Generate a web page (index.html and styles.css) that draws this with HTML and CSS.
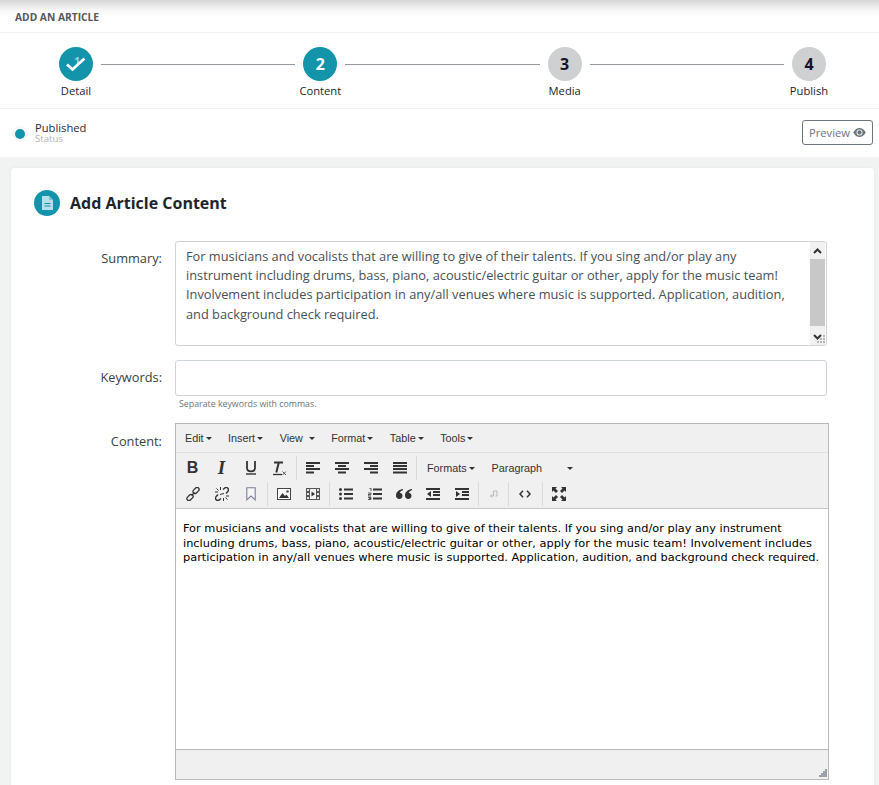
FILE: index.html
```html
<!DOCTYPE html>
<html lang="en">
<head>
<meta charset="utf-8">
<title>Add an article</title>
<link rel="stylesheet" href="styles.css">
</head>
<body>
<header class="top">ADD AN ARTICLE</header>
<nav class="stepper">
  <div class="step">
    <div class="dot done"><span class="ghost">1</span>
      <svg class="check" width="20" height="15" viewBox="0 0 20 15"><path d="M1 7.500l5.500 5L18.500 1.500" fill="none" stroke="#fff" stroke-width="2.700"/></svg>
    </div>
    <span class="step-label">Detail</span>
  </div>
  <div class="line"></div>
  <div class="step"><div class="dot active">2</div><span class="step-label">Content</span></div>
  <div class="line"></div>
  <div class="step"><div class="dot">3</div><span class="step-label">Media</span></div>
  <div class="line"></div>
  <div class="step"><div class="dot">4</div><span class="step-label">Publish</span></div>
</nav>
<section class="status">
  <div class="status-left">
    <span class="status-dot"></span>
    <div class="status-text"><div class="status-value">Published</div><div class="status-key">Status</div></div>
  </div>
  <button class="preview">Preview
    <svg width="13" height="9" viewBox="0 0 14 10"><path d="M0 5C2 1.600 4.500 0 7 0s5 1.600 7 5c-2 3.400-4.500 5-7 5S2 8.400 0 5z" fill="#6c757d"/><circle cx="7" cy="5" r="3.300" fill="#fff"/><circle cx="7" cy="5" r="2.400" fill="#6c757d"/></svg>
  </button>
</section>
<main class="page">
  <div class="card">
    <div class="card-head">
      <span class="head-icon">
        <svg width="12" height="14" viewBox="0 0 12 14"><path d="M1 0h7l4 4v10H1z" fill="#b5e0ea"/><path d="M8 0v4h4z" fill="#7cc4d4"/><path d="M3.500 7.500h6M3.500 10h6" stroke="#1394ab" stroke-width="1"/></svg>
      </span>
      <h1 class="card-title">Add Article Content</h1>
    </div>
    <div class="row">
      <label class="label">Summary:</label>
      <div class="summary">
        <div class="summary-text">For musicians and vocalists that are willing to give of their talents. If you sing and/or play any instrument including drums, bass, piano, acoustic/electric guitar or other, apply for the music team! Involvement includes participation in any/all venues where music is supported. Application, audition, and background check required.</div>
        <div class="scrollbar">
          <div class="sb-btn"><svg width="9" height="6" viewBox="0 0 9 6"><path d="M1 5l3.500-3.500L8 5" fill="none" stroke="#333" stroke-width="2"/></svg></div>
          <div class="sb-thumb"></div>
          <div class="sb-btn sb-end"><svg width="9" height="6" viewBox="0 0 9 6"><path d="M1 1l3.500 3.500L8 1" fill="none" stroke="#333" stroke-width="2"/></svg></div>
        </div>
        <svg class="grip" width="9" height="9" viewBox="0 0 9 9"><path d="M7 0h2v2H7zM4 3h2v2H4zM7 3h2v2H7zM1 6h2v2H1zM4 6h2v2H4zM7 6h2v2H7z" fill="#b5b5b5"/></svg>
      </div>
    </div>
    <div class="row row-keywords">
      <label class="label">Keywords:</label>
      <div class="field">
        <div class="input"></div>
        <small class="hint">Separate keywords with commas.</small>
      </div>
    </div>
    <div class="row row-content">
      <label class="label label-content">Content:</label>
      <div class="editor">
        <div class="menubar">
          <span class="menu">Edit<i class="caret"></i></span>
          <span class="menu">Insert<i class="caret"></i></span>
          <span class="menu menu-view">View<i class="caret"></i></span>
          <span class="menu">Format<i class="caret"></i></span>
          <span class="menu">Table<i class="caret"></i></span>
          <span class="menu">Tools<i class="caret"></i></span>
        </div>
        <div class="toolbar">
          <div class="tb-row">
            <div class="grp">
              <span class="tb tb-b">B</span>
              <span class="tb tb-i">I</span>
              <span class="tb"><svg width="12" height="14" viewBox="0 0 12 14"><path d="M2 0v7c0 4.500 8 4.500 8 0V0" fill="none" stroke="#333" stroke-width="1.800"/><path d="M1 13h10" stroke="#333" stroke-width="1.400"/></svg></span>
              <span class="tb"><svg width="15" height="15" viewBox="0 0 15 15"><path d="M2 1.500h9M6.800 1.500L4.300 11.500" fill="none" stroke="#333" stroke-width="2"/><path d="M1 13.500h9" stroke="#333" stroke-width="1.300"/><path d="M10.500 10.500l3.500 3.500M14 10.500L10.500 14" stroke="#555"/></svg></span>
            </div>
            <div class="grp">
              <span class="tb"><svg class="ic" viewBox="0 0 14 12"><path d="M0 1h14M0 4h8M0 7h14M0 10.500h8" stroke="#333" stroke-width="2"/></svg></span>
              <span class="tb"><svg class="ic" viewBox="0 0 14 12"><path d="M0 1h14M3 4h8M0 7h14M3 10.500h8" stroke="#333" stroke-width="2"/></svg></span>
              <span class="tb"><svg class="ic" viewBox="0 0 14 12"><path d="M0 1h14M6 4h8M0 7h14M6 10.500h8" stroke="#333" stroke-width="2"/></svg></span>
              <span class="tb"><svg class="ic" viewBox="0 0 14 12"><path d="M0 1h14M0 4h14M0 7h14M0 10.500h14" stroke="#333" stroke-width="2"/></svg></span>
            </div>
            <div class="grp grp-text">
              <span class="drop drop-formats">Formats<i class="caret"></i></span>
              <span class="drop drop-para"><span>Paragraph</span><i class="caret"></i></span>
            </div>
          </div>
          <div class="tb-row">
            <div class="grp">
              <span class="tb"><svg class="ic14" viewBox="0 0 14 14"><g fill="none" stroke="#333" stroke-width="1.300"><rect x="6.500" y="1.500" width="7" height="4" rx="2" transform="rotate(-45 10 3.500)"/><rect x=".5" y="8.500" width="7" height="4" rx="2" transform="rotate(-45 4 10.500)"/><path d="M5.500 8.500l3-3"/></g></svg></span>
              <span class="tb"><svg class="ic14" viewBox="0 0 14 14"><g fill="none" stroke="#333"><path d="M8 2.500l1.500-1.300a2.300 2.300 0 0 1 3.300 3.300L11 6.500M6 11.500l-1.500 1.300a2.300 2.300 0 0 1-3.300-3.300L3 7.500" stroke-width="1.400"/><path d="M5.500 0v3M8.500 11v3M0 5h3M11 9h3M1.500 1.500l2 2M12.500 12.500l-2-2M5 7.500l4-1"/></g></svg></span>
              <span class="tb"><svg width="10" height="14" viewBox="0 0 10 14"><path d="M.8.800h8.400v12L5 9l-4.200 3.800z" fill="#f6f6f6" stroke="#7b7f9c" stroke-width="1.100"/></svg></span>
            </div>
            <div class="grp">
              <span class="tb"><svg class="ic" viewBox="0 0 14 12"><rect x=".5" y=".5" width="13" height="11" fill="#fff" stroke="#444"/><path d="M2 10l3.500-5L8 8l1.500-1.500L12 10z" fill="#333"/><circle cx="10.500" cy="3.500" r="1.300" fill="#555"/></svg></span>
              <span class="tb"><svg class="ic" viewBox="0 0 14 12"><rect width="14" height="12" fill="#555"/><path d="M1 1h2v2H1zM1 5h2v2H1zM1 9h2v2H1zM11 1h2v2h-2zM11 5h2v2h-2zM11 9h2v2h-2z" fill="#e4e4e4"/><path d="M4 1h6v10H4z" fill="#f4f4f4"/><path d="M5.500 3.500L9 6 5.500 8.500z" fill="#333"/></svg></span>
            </div>
            <div class="grp">
              <span class="tb"><svg class="ic" viewBox="0 0 14 12"><path d="M5 1.500h9M5 6h9M5 10.500h9" stroke="#333" stroke-width="2"/><circle cx="1.500" cy="1.500" r="1.500" fill="#333"/><circle cx="1.500" cy="6" r="1.500" fill="#333"/><circle cx="1.500" cy="10.500" r="1.500" fill="#333"/></svg></span>
              <span class="tb"><svg class="ic" viewBox="0 0 14 12"><path d="M5 1.500h9M5 6h9M5 10.500h9" stroke="#333" stroke-width="2"/><path d="M1 0h2v3M0 5h3v1.500H0V8h3M0 9.500h3V11.500H0M1 10.500h2" fill="none" stroke="#333" stroke-width=".8"/></svg></span>
              <span class="tb"><svg width="16" height="10" viewBox="0 0 16 10"><path d="M7 0C3 .5 0 3 0 6.500 0 8.500 1.300 10 3.300 10s3.200-1.400 3.200-3.200S5.200 3.800 3.700 3.700C4.200 2.500 5.500 1.500 7 1.200zM16 0c-4 .5-7 3-7 6.500 0 2 1.300 3.500 3.300 3.500s3.200-1.400 3.200-3.200-1.300-3-2.800-3.100c.5-1.200 1.800-2.200 3.300-2.500z" fill="#333"/></svg></span>
              <span class="tb"><svg class="ic" viewBox="0 0 14 12"><path d="M0 1h14M7 4h7M7 7h7M0 11h14" stroke="#333" stroke-width="2"/><path d="M5 3v6L1 6z" fill="#333"/></svg></span>
              <span class="tb"><svg class="ic" viewBox="0 0 14 12"><path d="M0 1h14M7 4h7M7 7h7M0 11h14" stroke="#333" stroke-width="2"/><path d="M1 3v6l4-3z" fill="#333"/></svg></span>
            </div>
            <div class="grp">
              <span class="tb tb-narrow"><svg width="9" height="9" viewBox="0 0 9 9"><path d="M4.500 1v5H1.500M1.500 6L3 4.500M1.500 6L3 7.500M4.500 1H8v5H6.500" fill="none" stroke="#b9b9b9"/></svg></span>
            </div>
            <div class="grp">
              <span class="tb tb-wide"><svg width="12" height="8" viewBox="0 0 12 8"><path d="M4 .800L1 4l3 3.200M8 .800L11 4 8 7.200" fill="none" stroke="#333" stroke-width="1.500"/></svg></span>
            </div>
            <div class="grp">
              <span class="tb tb-wide"><svg width="14" height="14" viewBox="0 0 14 14"><path d="M0 0h5L3.500 1.500 6 4 4 6 1.500 3.500 0 5zM14 0v5l-1.500-1.500L10 6 8 4l2.500-2.500L9 0zM0 14V9l1.500 1.500L4 8l2 2-2.500 2.500L5 14zM14 14H9l1.500-1.500L8 10l2-2 2.500 2.500L14 9z" fill="#333"/></svg></span>
            </div>
          </div>
        </div>
        <div class="content">For musicians and vocalists that are willing to give of their talents. If you sing and/or play any instrument including drums, bass, piano, acoustic/electric guitar or other, apply for the music team! Involvement includes participation in any/all venues where music is supported. Application, audition, and background check required.</div>
        <div class="statusbar">
          <svg class="resize" width="9" height="9" viewBox="0 0 9 9"><path d="M7 0h2v2H7zM5 2h2v2H5zM7 2h2v2H7zM3 4h2v2H3zM5 4h2v2H5zM7 4h2v2H7zM1 6h2v2H1zM3 6h2v2H3zM5 6h2v2H5zM7 6h2v2H7z" fill="#9aa2ad"/></svg>
        </div>
      </div>
    </div>
  </div>
</main>
</body>
</html>
```

FILE: styles.css
```css
* { box-sizing: border-box; }
html, body { margin: 0; height: 785px; overflow: hidden; }
body { font-family: "Open Sans", sans-serif; color: #212529; background: #fff; }

.top {
  height: 33px;
  padding: 10px 15px 0;
  font-size: 10.240px;
  line-height: 14px;
  font-weight: 700;
  color: #55585c;
  background: linear-gradient(#d6d6d6 0, #f6f6f6 10px, #fff 17px);
  border-bottom: 1px solid #f2f2f2;
}

.stepper {
  height: 76px;
  padding: 14px 45px 0 51px;
  display: flex;
  align-items: flex-start;
  border-bottom: 1px solid #f2f2f2;
}
.step { width: 50px; flex: none; display: flex; flex-direction: column; align-items: center; }
.dot {
  width: 34px; height: 34px;
  border-radius: 50%;
  background: #cfd0d2;
  color: #14142b;
  font-size: 16px;
  font-weight: 700;
  display: flex; align-items: center; justify-content: center;
  position: relative;
}
.dot.active, .dot.done { background: #1394ab; color: #fff; }
.ghost { position: absolute; color: #8fd0dc; font-size: 11px; line-height: 12px; left: 15px; top: 8px; }
.check { position: relative; }
.step-label { font-size: 11.200px; line-height: 15px; margin-top: 2px; white-space: nowrap; color: #1d1d2c; }
.line { flex: 1; height: 1px; background: #96969f; margin-top: 17px; }

.status {
  height: 48px;
  padding: 12px 6px 0 15px;
  display: flex;
  justify-content: space-between;
  align-items: flex-start;
}
.status-left { display: flex; align-items: center; }
.status-dot {
  width: 10px; height: 10px; border-radius: 50%;
  background: #1394ab;
  box-shadow: 0 0 0 3px #f6f7f7;
  margin: 3px 10px 0 0;
}
.status-value { font-size: 11.200px; line-height: 13px; color: #2a2a38; }
.status-key { font-size: 9.600px; line-height: 9px; color: #b3b3b3; }
.preview {
  width: 71px; height: 25px;
  margin-top: -1px;
  padding: 0;
  background: #fff;
  border: 1px solid #6c757d;
  border-radius: 3px;
  color: #6c757d;
  font: 11.200px "Open Sans", sans-serif;
  display: flex; align-items: center; justify-content: center; gap: 3px;
}

.page { background: #f1f3f3; height: 628px; padding: 11px 5px 0 11px; }
.card {
  background: #fff;
  height: 640px;
  border-radius: 3px;
  padding: 22px 45px 0 23px;
  box-shadow: 0 0 3px rgba(0,0,0,.06);
}
.card-head { display: flex; align-items: center; gap: 10px; margin-bottom: 25px; }
.head-icon {
  width: 26px; height: 26px; border-radius: 50%;
  background: #1394ab;
  display: flex; align-items: center; justify-content: center;
}
.card-title { margin: 0; font-size: 16px; line-height: 26px; font-weight: 700; color: #212529; }

.row { display: flex; gap: 13px; }
.label { width: 128px; flex: none; text-align: right; font-size: 12.800px; line-height: 18px; padding-top: 8px; color: #3b3f44; }
.row-keywords { margin-top: 14px; }
.row-content { margin-top: 13px; }
.label-content { padding-top: 9px; }

.summary {
  width: 652px; height: 105px;
  border: 1px solid #ced4da;
  border-radius: 3px;
  display: flex;
  position: relative;
  overflow: hidden;
}
.summary-text { flex: 1; padding: 5px 10px; font-size: 12.800px; line-height: 19.200px; color: #495057; }
.scrollbar { width: 15px; flex: none; margin-right: 1px; display: flex; flex-direction: column; background: #f1f1f1; }
.sb-btn { height: 17px; display: flex; align-items: center; justify-content: center; flex: none; }
.sb-thumb { height: 67px; background: #c8c8c8; }
.sb-end { margin-top: auto; }
.grip { position: absolute; right: 1px; bottom: 1px; }

.field { width: 652px; }
.input { height: 36px; border: 1px solid #ced4da; border-radius: 3px; }
.hint { display: block; font-size: 8.800px; line-height: 12px; margin: 2px 0 0 4px; color: #6c757d; }

.editor { width: 654px; height: 357px; border: 1px solid #b9b9b9; display: flex; flex-direction: column; background: #fff; }
.menubar { height: 29px; background: #f0f0f0; border-bottom: 1px solid #e2e2e2; padding: 0 0 0 9px; display: flex; align-items: center; gap: 16.500px; font: 10.800px "Liberation Sans", sans-serif; color: #333; }
.menu { display: inline-flex; align-items: center; justify-content: space-between; }
.menu-view { min-width: 35px; }
.caret { display: inline-block; width: 0; height: 0; margin-left: 2px; border-left: 3px solid transparent; border-right: 3px solid transparent; border-top: 3px solid #333; }
.toolbar { height: 56px; background: #f0f0f0; border-bottom: 1px solid #c5c5c5; padding: 2px 0 0 2px; }
.tb-row { display: flex; height: 26px; }
.grp { display: flex; height: 24px; margin-top: 1px; padding-right: 2px; border-right: 1px solid #dadada; margin-right: 1px; }
.grp:last-child { border-right: 0; }
.tb { width: 29px; height: 24px; display: flex; align-items: center; justify-content: center; color: #333; }
.tb-narrow { width: 26px; }
.tb-wide { width: 30px; }
.tb-b { font: 700 16px "Liberation Sans", sans-serif; }
.tb-i { font: italic 700 19px "Liberation Serif", serif; }
.ic { width: 14px; height: 12px; }
.ic14 { width: 14px; height: 14px; }
.grp-text { border-right: 0; align-items: center; font: 10.800px "Liberation Sans", sans-serif; color: #333; }
.drop { display: inline-flex; align-items: center; }
.drop-formats { margin-left: 9px; }
.drop-para { margin-left: 17px; width: 81px; justify-content: space-between; }

.content { flex: 1; padding: 12px 7px; font: 11.350px/14.600px "DejaVu Sans", Verdana, sans-serif; color: #000; }
.statusbar { height: 30px; flex: none; background: #f0f0f0; border-top: 1px solid #b9b9b9; position: relative; }
.resize { position: absolute; right: 1px; bottom: 1px; }
```
